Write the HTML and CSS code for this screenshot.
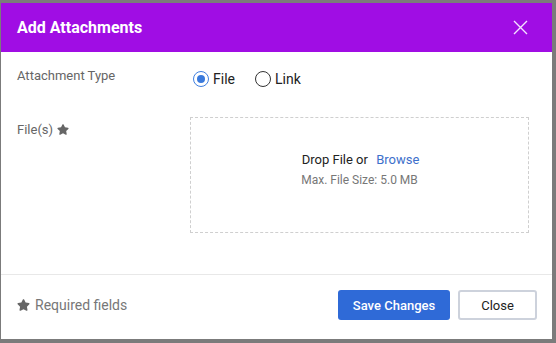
FILE: index.html
```html
<!DOCTYPE html>
<html lang="en">
<head>
    <meta charset="UTF-8">
    <meta name="viewport" content="width=device-width, initial-scale=1.0">
    <title>Add Attachments</title>
    <link rel="stylesheet" href="styles.css">
</head>
<body>
    <div class="modal">
        <div class="modal-header">
            <h2 class="modal-title">Add Attachments</h2>
            <button class="modal-close" aria-label="Close">
                <svg width="15" height="15" viewBox="0 0 15 15">
                    <path d="M1 1L14 14M14 1L1 14" stroke="#f4e2ff" stroke-width="1.4" fill="none"/>
                </svg>
            </button>
        </div>

        <div class="modal-body">
            <div class="form-row">
                <div class="form-label">Attachment Type</div>
                <div class="radio-group">
                    <label class="radio">
                        <span class="radio-circle checked"></span>
                        <span>File</span>
                    </label>
                    <label class="radio">
                        <span class="radio-circle"></span>
                        <span>Link</span>
                    </label>
                </div>
            </div>

            <div class="form-row files-row">
                <div class="form-label">
                    File(s)
                    <svg class="star" width="12" height="11" viewBox="0 0 576 512"><path d="M259.3 17.8L194 150.2 47.9 171.5c-26.2 3.8-36.7 36.1-17.7 54.6l105.7 103-25 145.5c-4.5 26.3 23.2 46 46.4 33.7L288 439.6l130.7 68.7c23.2 12.2 50.9-7.4 46.4-33.7l-25-145.5 105.7-103c19-18.5 8.5-50.8-17.7-54.6L382 150.2 316.7 17.8c-11.7-23.6-45.6-23.9-57.4 0z"/></svg>
                </div>
                <div class="dropzone">
                    <div class="drop-text">Drop File or <a href="#" class="browse">Browse</a></div>
                    <div class="drop-hint">Max. File Size: 5.0 MB</div>
                </div>
            </div>
        </div>

        <div class="modal-footer">
            <div class="required-note">
                <svg class="star" width="13" height="12" viewBox="0 0 576 512"><path d="M259.3 17.8L194 150.2 47.9 171.5c-26.2 3.8-36.7 36.1-17.7 54.6l105.7 103-25 145.5c-4.5 26.3 23.2 46 46.4 33.7L288 439.6l130.7 68.7c23.2 12.2 50.9-7.4 46.4-33.7l-25-145.5 105.7-103c19-18.5 8.5-50.8-17.7-54.6L382 150.2 316.7 17.8c-11.7-23.6-45.6-23.9-57.4 0z"/></svg>
                <span>Required fields</span>
            </div>
            <div class="footer-actions">
                <button class="btn btn-primary">Save Changes</button>
                <button class="btn btn-default">Close</button>
            </div>
        </div>
    </div>
</body>
</html>
```

FILE: styles.css
```css
* {
    margin: 0;
    padding: 0;
    box-sizing: border-box;
}

body {
    font-family: Roboto, 'Liberation Sans', sans-serif;
    background: #7b7b7b;
    padding: 3px 4px 4px 1px;
    min-height: 100vh;
}

.modal {
    width: 551px;
    height: 336px;
    background: #fff;
    display: flex;
    flex-direction: column;
}

.modal-header {
    height: 49px;
    background: #a00de4;
    display: flex;
    justify-content: space-between;
    align-items: center;
    padding: 0 24px 0 16px;
}

.modal-title {
    color: #fff;
    font-size: 16px;
    font-weight: 700;
}

.modal-close {
    background: none;
    border: none;
    display: flex;
    cursor: pointer;
}

.modal-body {
    height: 222px;
    padding: 15px 22px 0 16px;
}

.form-row {
    display: flex;
}

.form-label {
    width: 173px;
    flex-shrink: 0;
    font-size: 13px;
    line-height: 18px;
    color: #666;
    display: flex;
    align-items: flex-start;
    gap: 4px;
}

.form-label .star {
    margin-top: 3px;
}

.star {
    fill: #666;
}

.radio-group {
    display: flex;
    align-items: center;
    gap: 20px;
    height: 24px;
    margin-left: 3px;
}

.radio {
    display: flex;
    align-items: center;
    gap: 4px;
    font-size: 14px;
    color: #222;
}

.radio-circle {
    width: 16px;
    height: 16px;
    border-radius: 50%;
    border: 1px solid #333;
    display: flex;
    align-items: center;
    justify-content: center;
}

.radio-circle.checked {
    border: 1.5px solid #3f7fe0;
}

.radio-circle.checked::after {
    content: '';
    width: 8px;
    height: 8px;
    border-radius: 50%;
    background: #3a7adc;
}

.files-row {
    margin-top: 26px;
}

.files-row .form-label {
    padding-top: 4px;
}

.dropzone {
    width: 339px;
    height: 116px;
    border: 1px dashed #cfcfcf;
    display: flex;
    flex-direction: column;
    align-items: center;
    justify-content: center;
    padding-bottom: 10px;
}

.drop-text {
    font-size: 13px;
    line-height: 20px;
    color: #222;
    padding-left: 2px;
}

.browse {
    color: #3d6fcb;
    text-decoration: none;
    margin-left: 5px;
}

.drop-hint {
    font-size: 12px;
    line-height: 20px;
    color: #777;
}

.modal-footer {
    flex: 1;
    border-top: 1px solid #e8e8e8;
    display: flex;
    justify-content: space-between;
    align-items: center;
    padding: 0 15px 4px 16px;
}

.required-note {
    display: flex;
    align-items: center;
    gap: 5px;
    font-size: 14px;
    color: #777;
}

.footer-actions {
    display: flex;
    gap: 8px;
}

.btn {
    height: 30px;
    border-radius: 3px;
    font-family: Roboto, 'Liberation Sans', sans-serif;
    font-size: 13px;
    cursor: pointer;
}

.btn-primary {
    width: 112px;
    background: #2f6ad7;
    border: none;
    color: #fff;
    font-weight: 500;
}

.btn-default {
    width: 79px;
    background: #fff;
    border: 2px solid #cdd2dc;
    color: #222;
}
```
